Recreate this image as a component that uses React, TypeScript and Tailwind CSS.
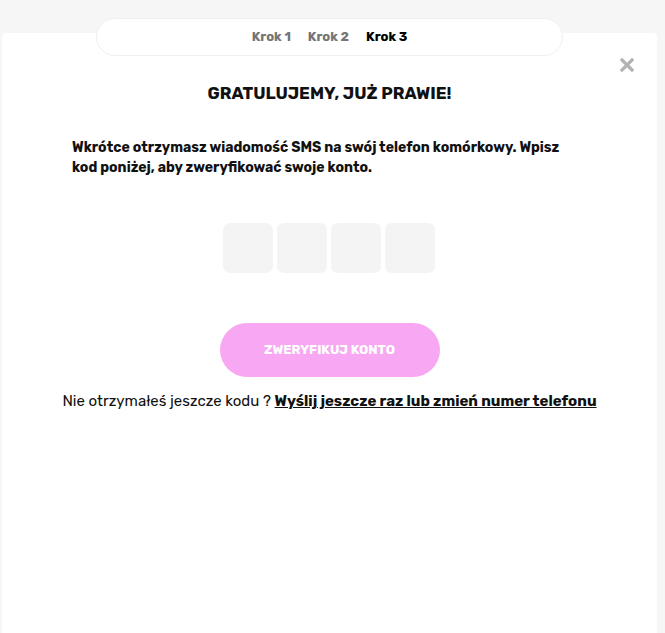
import React from 'react';

const font = { fontFamily: 'Rubik, Inter, "Noto Sans", sans-serif' };

export default function App() {
  const digits = [0, 1, 2, 3];
  return (
    <div className="min-h-[633px] bg-[#f6f6f6] pt-[33px] pl-[2px] pr-[8px]" style={font}>
      <div className="relative min-h-[600px] rounded-t-[4px] bg-white">
        {/* steps pill */}
        <div className="absolute left-[94px] top-[-15px] flex h-[38px] w-[467px] items-center justify-center gap-[17px] rounded-full border border-[#f0f0f0] bg-white text-[13px] font-bold">
          <span className="text-[#757575]">Krok 1</span>
          <span className="text-[#757575]">Krok 2</span>
          <span className="text-black">Krok 3</span>
        </div>

        <button className="absolute right-[23px] top-[25px] text-[#b3b3b3]">
          <svg width="14" height="14" viewBox="0 0 14 14">
            <path d="M2 2L12 12M12 2L2 12" stroke="currentColor" strokeWidth="3.2" strokeLinecap="square" />
          </svg>
        </button>

        <div className="flex flex-col items-center pt-[49px]">
          <h1 className="text-[17px] font-bold leading-[22px] text-[#111]">GRATULUJEMY, JUŻ PRAWIE!</h1>
          <p className="mt-[34px] w-[500px] self-start ml-[70px] text-[14px] font-bold leading-[20px] text-[#111]">
            Wkrótce otrzymasz wiadomość SMS na swój telefon komórkowy. Wpisz kod poniżej, aby zweryfikować swoje konto.
          </p>

          <div className="mt-[45px] flex gap-[4px] pr-[1px]">
            {digits.map((d) => (
              <div key={d} className="h-[50px] w-[50px] rounded-[7px] bg-[#f4f4f4]" />
            ))}
          </div>

          <button className="mt-[50px] h-[54px] w-[220px] rounded-full bg-[#f8a8f3] text-[13px] font-bold text-white">
            ZWERYFIKUJ KONTO
          </button>

          <p className="mt-[14px] text-[15px] leading-[20px] text-[#111]">
            Nie otrzymałeś jeszcze kodu ?{' '}
            <a className="font-bold underline" href="#">Wyślij jeszcze raz lub zmień numer telefonu</a>
          </p>
        </div>
      </div>
    </div>
  );
}
